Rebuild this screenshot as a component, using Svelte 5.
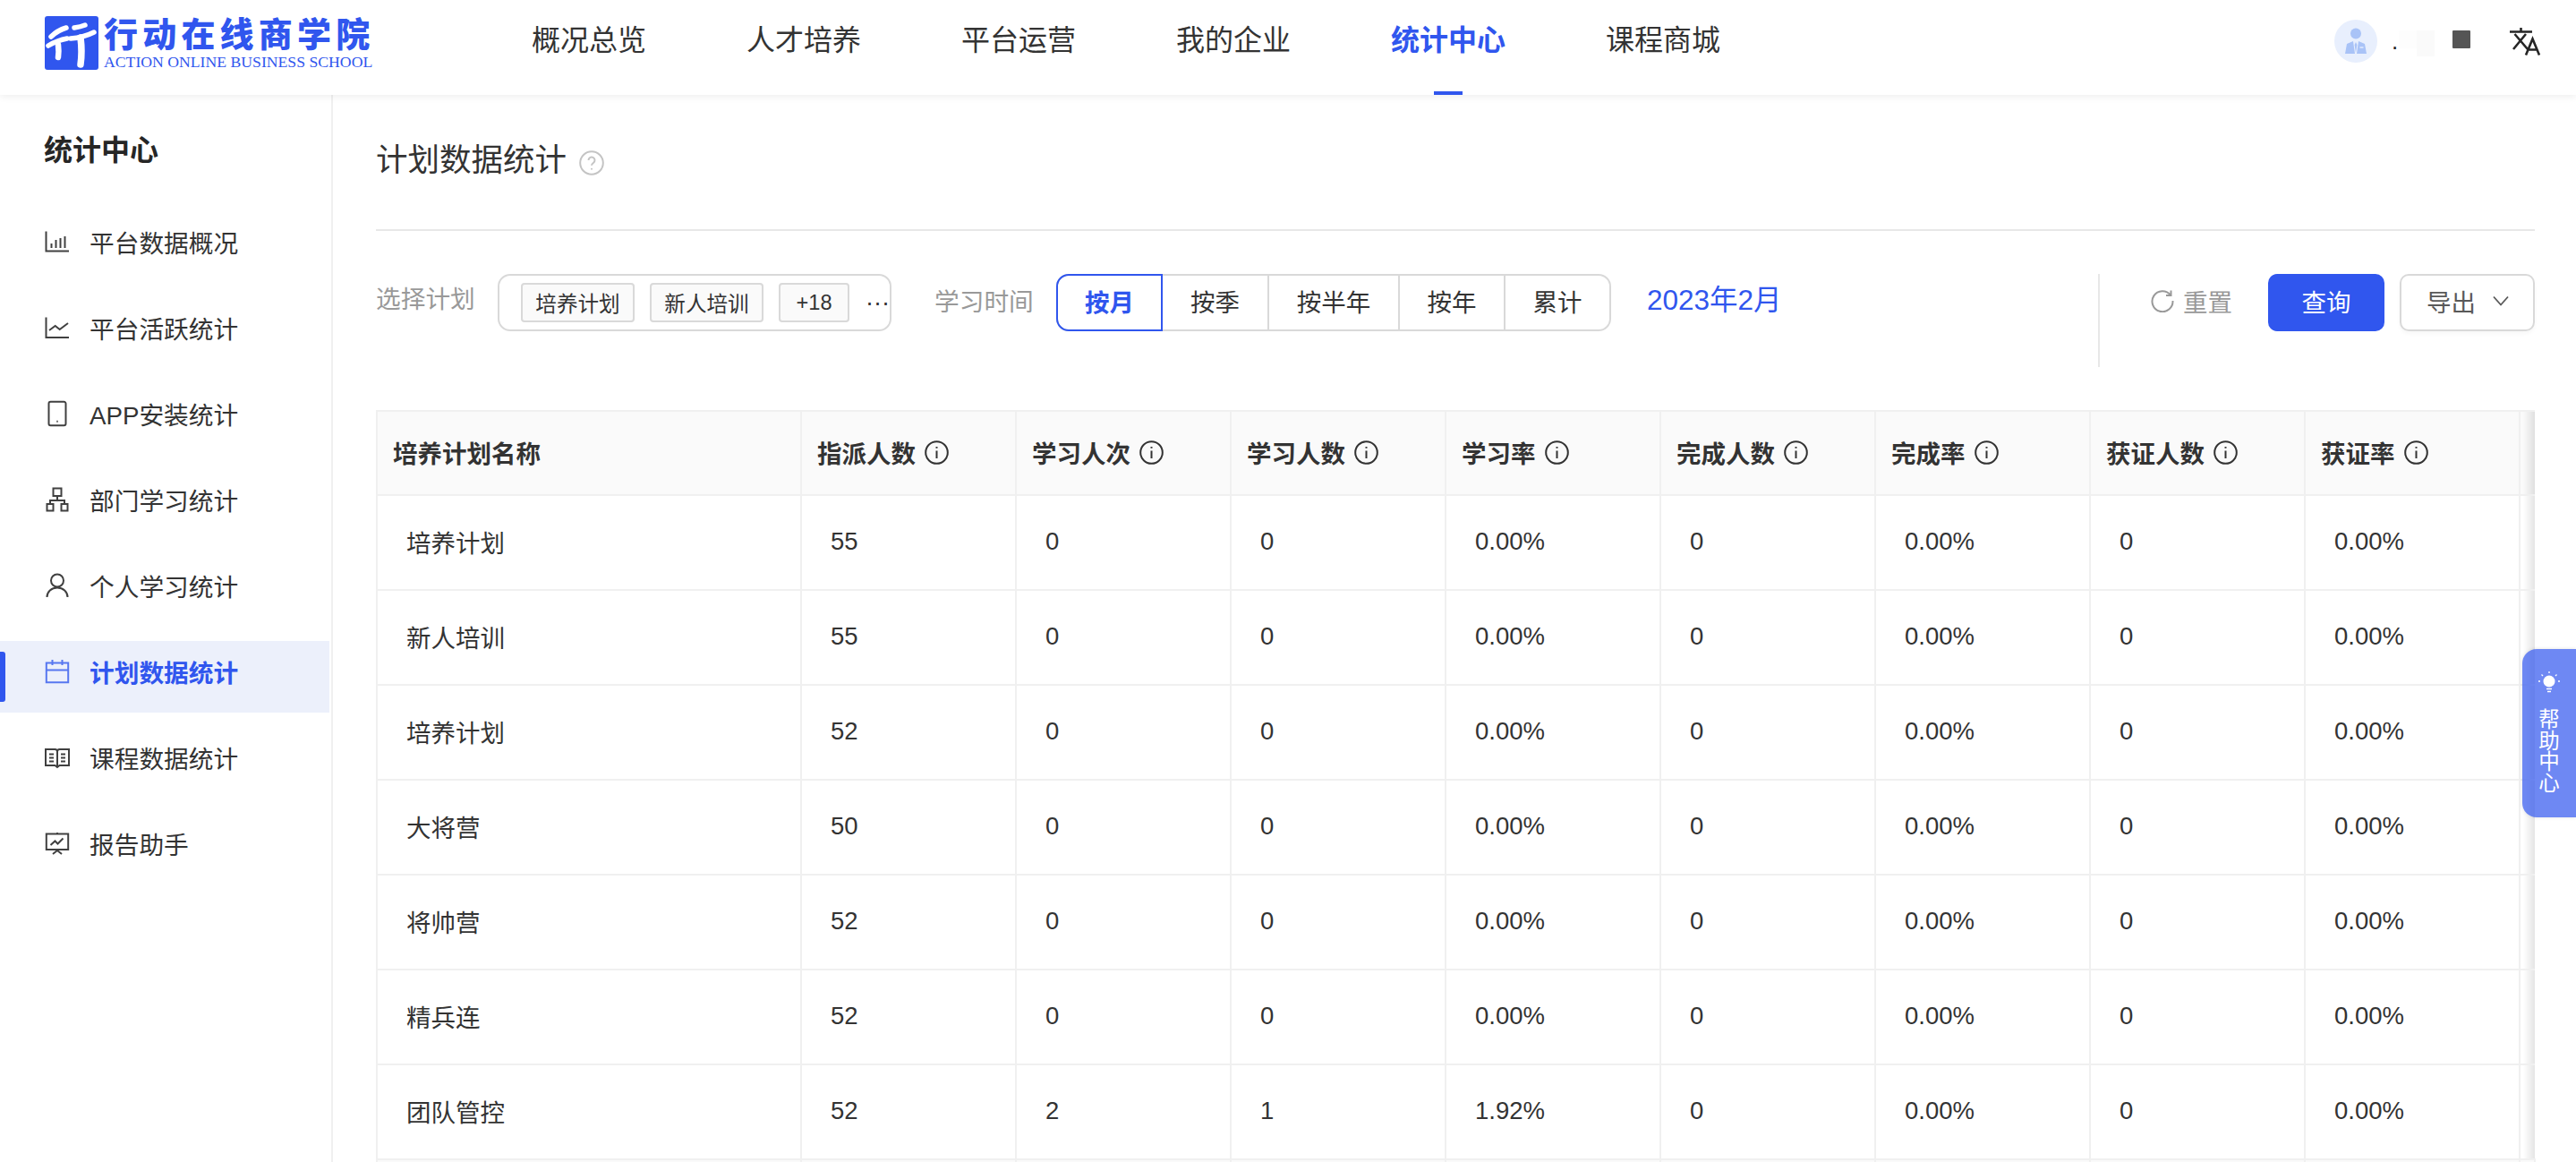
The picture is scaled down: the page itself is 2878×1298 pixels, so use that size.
<script>
	const navItems = ["概况总览", "人才培养", "平台运营", "我的企业", "统计中心", "课程商城"];
	const activeNav = "统计中心";

	// all sidebar icons are stroked paths in a 28x28 box
	const sideItems = [
		{ label: "平台数据概况", d: "M1.5 2.5V24.5H27M7.5 21v-5M12.5 21v-9M17.5 21v-11M22.5 21V8" },
		{ label: "平台活跃统计", d: "M1.5 2.5V25H27M5 17l6.7-5 5 4L26 9" },
		{ label: "APP安装统计", d: "M6.5.8h15a2 2 0 0 1 2 2v22.4a2 2 0 0 1-2 2h-15a2 2 0 0 1-2-2V2.8a2 2 0 0 1 2-2ZM13.3 22.8h1.4" },
		{ label: "部门学习统计", d: "M9.5 1.5h9V10h-9ZM14 10v5M6 19v-4h16v4M2.5 19h7v7.5h-7ZM18.5 19h7v7.5h-7Z" },
		{ label: "个人学习统计", d: "M7 8.5a7 7 0 1 0 14 0a7 7 0 1 0-14 0M2.5 27c0-6 5-10.5 11.5-10.5S25.5 21 25.5 27" },
		{ label: "计划数据统计", d: "M1.8 4.5H26.2V26.2H1.8ZM1.8 12.5H26.2M8.5 1v6M19.5 1v6", active: true },
		{ label: "课程数据统计", d: "M1 5h10.5Q14 5 14 7.5Q14 5 16.5 5H27V23H16.5L14 25l-2.5-2H1ZM14 7.5V25M5 10.5h5M5 14.5h5M5 18.5h5M18 10.5h5M18 14.5h5M18 18.5h5" },
		{ label: "报告助手", d: "M14 2v1.5M1.8 3.5H26.2V21H1.8ZM6.5 16l5-4.5 3 3 6-6M14 21v1M9 26l5-4 5 4" }
	];

	const plans = ["培养计划", "新人培训", "+18"];
	const periods = ["按月", "按季", "按半年", "按年", "累计"];
	const columns = ["指派人数", "学习人次", "学习人数", "学习率", "完成人数", "完成率", "获证人数", "获证率"];

	const rows = [
		["培养计划", "55", "0", "0", "0.00%", "0", "0.00%", "0", "0.00%"],
		["新人培训", "55", "0", "0", "0.00%", "0", "0.00%", "0", "0.00%"],
		["培养计划", "52", "0", "0", "0.00%", "0", "0.00%", "0", "0.00%"],
		["大将营", "50", "0", "0", "0.00%", "0", "0.00%", "0", "0.00%"],
		["将帅营", "52", "0", "0", "0.00%", "0", "0.00%", "0", "0.00%"],
		["精兵连", "52", "0", "0", "0.00%", "0", "0.00%", "0", "0.00%"],
		["团队管控", "52", "2", "1", "1.92%", "0", "0.00%", "0", "0.00%"]
	];
</script>

<div class="page">
	<header class="topbar">
		<div class="logo">
			<svg class="logo-mark" viewBox="0 0 60 60" aria-hidden="true">
				<rect width="60" height="60" rx="3" fill="#3056ee" />
				<g fill="none" stroke="#fff" stroke-linecap="round" stroke-width="5.500">
					<path d="M7 23Q14 16 24 13" />
					<path d="M33 13Q40 12 45 10" />
					<path d="M4 33Q14 27 25 25" />
					<path d="M29 25Q43 24 55 18" />
					<path d="M15 32Q16 40 15 46" stroke-width="6.500" />
					<path d="M40 24Q42 40 40 54" stroke-width="7.500" />
				</g>
			</svg>
			<div class="logo-text">
				<div class="logo-cn">行动在线商学院</div>
				<div class="logo-en">ACTION ONLINE BUSINESS SCHOOL</div>
			</div>
		</div>
		<nav class="topnav">
			{#each navItems as item}
				<span class="topnav-item" class:topnav-active={item === activeNav}>{item}</span>
			{/each}
		</nav>
		<div class="user">
			<svg class="avatar" viewBox="0 0 48 48" aria-hidden="true">
				<circle cx="24" cy="24" r="24" fill="#e8effd" />
				<circle cx="24" cy="15.5" r="6" fill="#a9c3f7" />
				<path d="M12 38l2-11 7-3 2 14ZM36 38l-2-11-7-3-2 14Z" fill="#a9c3f7" />
				<path d="M24 25l-1.4 3 1.4 9 1.4-9Z" fill="#a9c3f7" />
				<path d="M28.500 31h4" stroke="#fff" stroke-width="1" />
			</svg>
			<span class="user-dot">.</span>
			<span class="blur-a"></span>
			<span class="blur-b"></span>
			<span class="user-square"></span>
			<svg class="lang" viewBox="0 0 34 31" aria-hidden="true">
				<path d="M0 4.500H25M12.500 0V4.500M5.500 7L20 24M18 7L4 24M18 30.500L25.500 12.500L33 30.500M20.500 24.500H30.500" />
			</svg>
		</div>
	</header>

	<div class="layout">
		<aside class="sidebar">
			<h2 class="side-title">统计中心</h2>
			{#each sideItems as item}
				<div class="side-item" class:side-active={item.active}>
					<svg class="side-icon" viewBox="0 0 28 28" aria-hidden="true"><path d={item.d} /></svg>
					<span>{item.label}</span>
				</div>
			{/each}
		</aside>

		<main class="content">
			<div class="title-row">
				<h1>计划数据统计</h1>
				<svg class="help-icon" viewBox="0 0 28 28" aria-hidden="true">
					<circle cx="14" cy="14" r="12.800" />
					<path d="M10.500 11a3.500 3.500 0 1 1 5.600 2.800c-1.300 1-2.100 1.500-2.100 3M14 20v1.400" />
				</svg>
			</div>

			<div class="filters">
				<span class="filter-label">选择计划</span>
				<div class="plan-select">
					{#each plans as plan}
						<span class="tag">{plan}</span>
					{/each}
					<span class="more">···</span>
				</div>
				<span class="filter-label time-label">学习时间</span>
				<div class="segment">
					{#each periods as period, i}
						<span class="segment-item" class:segment-active={i === 0}>{period}</span>
					{/each}
				</div>
				<span class="date">2023年2月</span>
				<div class="actions">
					<span class="actions-line"></span>
					<span class="reset">
						<svg viewBox="0 0 26 26" aria-hidden="true">
							<path d="M22 6.500A11.500 11.500 0 1 0 24.500 13M22.500 1.500V7H17" />
						</svg>
						重置
					</span>
					<span class="btn-query">查询</span>
					<span class="btn-export">
						导出
						<svg viewBox="0 0 18 12" aria-hidden="true"><path d="M1 1.500L9 10.500L17 1.500" /></svg>
					</span>
				</div>
			</div>

			<table class="stats">
				<colgroup>
					<col class="col-name" />
					{#each columns as _}
						<col class="col-num" />
					{/each}
					<col class="col-edge" />
				</colgroup>
				<thead>
					<tr>
						<th>培养计划名称</th>
						{#each columns as column}
							<th>
								<span class="th-inner">
									{column}
									<svg class="info" viewBox="0 0 27 27" aria-hidden="true">
										<circle cx="13.500" cy="13.500" r="12.300" />
										<path d="M13.500 11.500V20M13.500 7v1.800" />
									</svg>
								</span>
							</th>
						{/each}
						<th class="edge"></th>
					</tr>
				</thead>
				<tbody>
					{#each rows as row}
						<tr>
							{#each row as cell}
								<td>{cell}</td>
							{/each}
							<td class="edge"></td>
						</tr>
					{/each}
					<tr class="summary">
						{#each Array(10) as _}
							<td></td>
						{/each}
					</tr>
				</tbody>
			</table>
		</main>
	</div>

	<div class="help-tab">
		<svg viewBox="0 0 26 28" aria-hidden="true">
			<circle cx="13" cy="12" r="6.500" fill="#fff" />
			<path d="M10 20.500h6M11 23.500h4" stroke="#fff" stroke-width="1.500" />
			<path d="M13 1v2M4.500 4.500l1.500 1.500M21.500 4.500L20 6M1 12h2M23 12h2" stroke="#fff" stroke-width="1.300" />
		</svg>
		<span>帮助中心</span>
	</div>
</div>

<style>
	:global(body) {
		margin: 0;
		background: #fff;
	}

	.page {
		position: relative;
		width: 2878px;
		height: 1298px;
		overflow: hidden;
		background: #fff;
		color: #333;
		font-family: "Liberation Sans", "Noto Sans CJK SC", sans-serif;
		font-size: 27.5px;
	}

	.topbar {
		position: relative;
		z-index: 1;
		display: flex;
		align-items: center;
		box-sizing: border-box;
		height: 106px;
		padding: 0 40px 0 50px;
		background: #fff;
		box-shadow: 0 2px 8px rgba(0, 0, 0, 0.07);
	}

	.logo {
		display: flex;
		align-items: center;
		gap: 6px;
		width: 366px;
		margin: 0 178px 10px 0;
		color: #3056ee;
	}

	.logo-mark {
		width: 60px;
		height: 60px;
		flex: none;
	}

	.logo-cn {
		font-size: 38px;
		font-weight: 900;
		line-height: 42px;
		letter-spacing: 5.2px;
		white-space: nowrap;
	}

	.logo-en {
		font-family: "Liberation Serif", serif;
		font-size: 17.700px;
		line-height: 18px;
		white-space: nowrap;
	}

	.topnav {
		display: flex;
		gap: 112px;
		height: 100%;
	}

	.topnav-item {
		position: relative;
		display: flex;
		align-items: center;
		padding-bottom: 22px;
		box-sizing: border-box;
		font-size: 32px;
		color: #333;
		white-space: nowrap;
	}

	.topnav-active {
		color: #3056ee;
		font-weight: 700;
	}

	.topnav-active::after {
		content: "";
		position: absolute;
		left: 48px;
		bottom: 0;
		width: 32px;
		height: 4px;
		background: #3056ee;
	}

	.user {
		display: flex;
		align-items: center;
		margin: 0 0 14px auto;
	}

	.avatar {
		width: 48px;
		height: 48px;
	}

	.user-dot {
		width: 8px;
		margin-left: 16px;
		font-size: 26px;
		line-height: 30px;
		color: #222;
	}

	.blur-a {
		width: 20px;
		height: 20px;
		margin-top: -4px;
		background: #fdfdfd;
	}

	.blur-b {
		width: 20px;
		height: 29px;
		margin-top: 5px;
		background: #fafafa;
	}

	.user-square {
		width: 20px;
		height: 20px;
		margin: -4px 0 0 20px;
		background: #555;
		border-radius: 1px;
	}

	.lang {
		width: 34px;
		height: 31px;
		margin-left: 44px;
		overflow: visible;
		fill: none;
		stroke: #262626;
		stroke-width: 2.600;
	}

	.layout {
		display: flex;
		height: 1192px;
	}

	.sidebar {
		box-sizing: border-box;
		flex: none;
		width: 372px;
		padding-right: 2px;
		border-right: 2px solid #f0f0f0;
	}

	.side-title {
		margin: 0;
		padding: 38px 0 0 49px;
		height: 130px;
		box-sizing: border-box;
		font-size: 32px;
		line-height: 48px;
		font-weight: 700;
		color: #262626;
	}

	.side-item {
		position: relative;
		display: flex;
		align-items: center;
		gap: 22px;
		box-sizing: border-box;
		height: 80px;
		margin-bottom: 16px;
		padding: 0 0 12px 50px;
		font-size: 27.700px;
		color: #333;
	}

	.side-icon {
		flex: none;
		width: 28px;
		height: 28px;
		overflow: visible;
		fill: none;
		stroke: #404040;
		stroke-width: 2;
	}

	.side-active {
		background: #ecf0fb;
		color: #3056ee;
		font-weight: 700;
	}

	.side-active::before {
		content: "";
		position: absolute;
		left: 0;
		top: 12px;
		width: 6px;
		height: 56px;
		border-radius: 0 3px 3px 0;
		background: #3056ee;
	}

	.side-active .side-icon {
		stroke: #5777f0;
	}

	.content {
		flex: 1;
		min-width: 0;
		padding: 0 46px 0 48px;
	}

	.title-row {
		display: flex;
		align-items: center;
		gap: 14px;
		box-sizing: content-box;
		height: 48px;
		padding: 49px 0 53px;
		border-bottom: 2px solid #e8e8e8;
	}

	.title-row h1 {
		margin: 0;
		font-size: 35.500px;
		line-height: 48px;
		font-weight: 400;
		color: #333;
	}

	.help-icon {
		width: 28px;
		height: 28px;
		margin-top: 6px;
		fill: none;
		stroke: #c4c4c4;
		stroke-width: 2;
	}

	.filters {
		display: flex;
		align-items: flex-start;
		height: 104px;
		margin: 48px 0;
	}

	.filter-label {
		flex: none;
		width: 112px;
		margin-right: 24px;
		line-height: 58px;
		color: #999;
		font-size: 27.700px;
		white-space: nowrap;
	}

	.time-label {
		margin-left: 48px;
		width: 112px;
		margin-right: 24px;
		line-height: 64px;
	}

	.plan-select {
		display: flex;
		flex: none;
		align-items: center;
		gap: 17px;
		box-sizing: border-box;
		width: 440px;
		height: 64px;
		padding-left: 24px;
		border: 2px solid #d9d9d9;
		border-radius: 14px;
	}

	.tag {
		display: flex;
		flex: none;
		align-items: center;
		justify-content: center;
		box-sizing: border-box;
		width: 127px;
		height: 44px;
		border: 2px solid #d9d9d9;
		border-radius: 4px;
		background: #fafafa;
		font-size: 23.600px;
		color: #333;
		white-space: nowrap;
	}

	.tag:nth-child(3) {
		width: 79px;
	}

	.more {
		margin-left: 1px;
		font-size: 27px;
		line-height: 1;
		white-space: nowrap;
	}

	.segment {
		display: flex;
		flex: none;
		box-sizing: border-box;
		height: 64px;
		border: 2px solid #d9d9d9;
		border-radius: 14px;
	}

	.segment-item {
		display: flex;
		align-items: center;
		justify-content: center;
		box-sizing: border-box;
		width: 118px;
		padding-bottom: 4px;
		border-left: 2px solid #d9d9d9;
		white-space: nowrap;
	}

	.segment-item:nth-child(3) {
		width: 146px;
	}

	.segment-item:last-child {
		width: 118px;
	}

	.segment-active {
		width: 119px;
		margin: -2px 0 -2px -2px;
		border: 2px solid #3056ee;
		border-radius: 14px 0 0 14px;
		color: #3056ee;
		font-weight: 700;
	}

	.segment-active + .segment-item {
		width: 117px;
		border-left: 0;
	}

	.date {
		margin-left: 40px;
		font-size: 31.500px;
		line-height: 58px;
		color: #3056ee;
		white-space: nowrap;
	}

	.actions {
		display: flex;
		align-items: flex-start;
		margin-left: auto;
	}

	.actions-line {
		width: 2px;
		height: 104px;
		margin-right: 57px;
		background: #e8e8e8;
	}

	.reset {
		display: flex;
		align-items: center;
		gap: 10px;
		height: 60px;
		padding-bottom: 4px;
		margin-right: 40px;
		color: #999;
	}

	.reset svg {
		width: 26px;
		height: 26px;
		fill: none;
		stroke: #999;
		stroke-width: 2;
	}

	.btn-query {
		display: flex;
		align-items: center;
		justify-content: center;
		width: 130px;
		height: 64px;
		margin-right: 17px;
		padding-bottom: 4px;
		box-sizing: border-box;
		border-radius: 10px;
		background: #3056ee;
		color: #fff;
	}

	.btn-export {
		display: flex;
		align-items: center;
		gap: 19px;
		box-sizing: border-box;
		width: 151px;
		height: 64px;
		padding: 0 0 4px 28px;
		border: 2px solid #d9d9d9;
		border-radius: 10px;
		color: #595959;
		box-shadow: 0 3px 4px rgba(0, 0, 0, 0.03);
	}

	.btn-export svg {
		width: 18px;
		height: 12px;
		fill: none;
		stroke: #595959;
		stroke-width: 1.800;
	}

	.stats {
		width: 2411px;
		table-layout: fixed;
		border-collapse: collapse;
	}

	.col-name {
		width: 474px;
	}

	.col-num {
		width: 240px;
	}

	.col-edge {
		width: 17px;
	}

	.stats th,
	.stats td {
		box-sizing: border-box;
		border: 2px solid #f0f0f0;
		text-align: left;
		white-space: nowrap;
	}

	.stats th {
		height: 94px;
		padding: 0 0 2px 17px;
		background: #fafafa;
		font-weight: 700;
		color: #333;
	}

	.stats td {
		height: 106px;
		padding: 0 0 2px 32px;
		color: #333;
	}

	.stats .edge {
		padding: 0;
		border-right: 0;
		background: linear-gradient(to right, rgba(0, 0, 0, 0) 20%, rgba(0, 0, 0, 0.1) 100%);
	}

	.stats th.edge {
		background: linear-gradient(to right, rgba(0, 0, 0, 0) 20%, rgba(0, 0, 0, 0.1) 100%), #fafafa;
	}

	.stats .summary td {
		background: #fafafa;
	}

	.th-inner {
		display: inline-flex;
		align-items: center;
		gap: 10px;
	}

	.info {
		flex: none;
		width: 27px;
		height: 27px;
		fill: none;
		stroke: #333;
		stroke-width: 2;
	}

	.help-tab {
		position: absolute;
		top: 725px;
		right: 0;
		display: flex;
		flex-direction: column;
		align-items: center;
		box-sizing: border-box;
		width: 60px;
		height: 188px;
		padding-top: 24px;
		border-radius: 16px 0 0 16px;
		background: rgba(48, 86, 238, 0.7);
		box-shadow: 0 0 4px rgba(0, 0, 0, 0.12);
		color: #fff;
	}

	.help-tab svg {
		width: 26px;
		height: 28px;
		flex: none;
		fill: none;
	}

	.help-tab span {
		width: 24px;
		margin-top: 16px;
		font-size: 23.500px;
		line-height: 23.500px;
		text-align: center;
	}
</style>
